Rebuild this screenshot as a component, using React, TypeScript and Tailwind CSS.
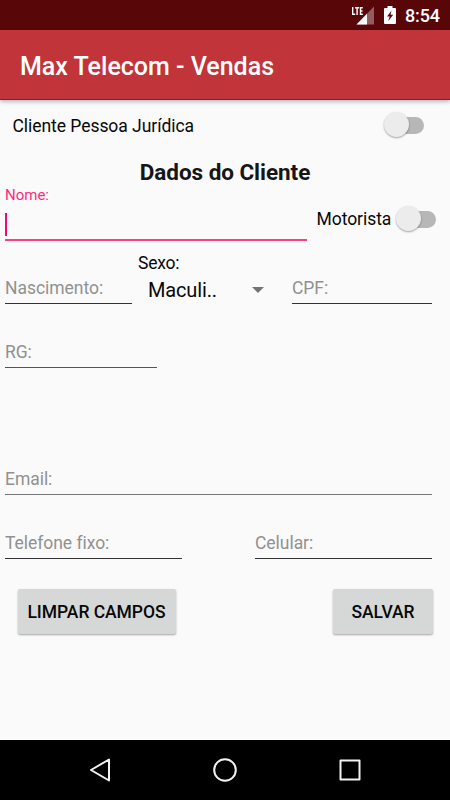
import clsx from 'clsx'

function Toggle() {
  return (
    <span role="switch" aria-checked="false" className="relative flex h-[26px] w-[40px] items-center justify-end">
      <span className="h-[17px] w-[34px] rounded-full bg-[#b7b7b7]" />
      <span className="absolute left-0 top-0 size-[25px] rounded-full bg-[#ececec] shadow-[0_1px_2px_rgba(0,0,0,0.35)]" />
    </span>
  )
}

type FieldProps = {
  label: string
  className?: string
  line?: string
}

function Field({ label, className, line = 'border-[#333333]' }: FieldProps) {
  return (
    <div className={clsx('flex h-[62px] items-end border-b pb-1', line, className)}>
      <span className="text-[17.5px] leading-[22px] tracking-[-0.04px] text-[#919191]">{label}</span>
    </div>
  )
}

function StatusBar() {
  return (
    <div className="flex h-[30px] items-center justify-end bg-[#590609] pr-[10px] text-white">
      <svg width="24" height="22" viewBox="0 0 24 22" className="mt-px">
        <path d="M23 1.500v18H5.500z" fill="#fff" fillOpacity="0.35" />
        <path d="M16 8.700v10.800H5.500z" fill="#fff" />
        <path d="M1.700 2v7.300h2.500M4.100 2.700h4M6.100 2.700v7.200M11.800 2.700H9.500v6.600h2.300M9.500 6h2" fill="none" stroke="#fff" strokeWidth="1.400" />
      </svg>
      <svg width="12" height="18" viewBox="0 0 12 18" className="ml-[9px]">
        <path d="M3.500 0h5v2H11q1 0 1 1v14q0 1-1 1H1q-1 0-1-1V3q0-1 1-1h2.500z" fill="#fff" />
        <path d="M7.500 4.500 3 10.500h2.700L4.200 15.200 9.200 8.800H6.500z" fill="#590609" />
      </svg>
      <span className="ml-[9px] mt-px text-[18px] font-medium leading-none tracking-[-0.1px]">8:54</span>
    </div>
  )
}

function NavBar() {
  return (
    <div className="flex h-[60px] items-center justify-between bg-black px-[88px]">
      <svg width="24" height="24" viewBox="0 0 24 24" fill="none" stroke="#f2f2f2" strokeWidth="2" strokeLinejoin="round">
        <path d="M21 1.500v21L3 12z" />
      </svg>
      <svg width="24" height="24" viewBox="0 0 24 24" fill="none" stroke="#f2f2f2" strokeWidth="2">
        <circle cx="12" cy="12" r="10.800" />
      </svg>
      <svg width="24" height="24" viewBox="0 0 24 24" fill="none" stroke="#f2f2f2" strokeWidth="2" strokeLinejoin="round">
        <rect x="2.500" y="2.500" width="19" height="19" />
      </svg>
    </div>
  )
}

export default function App() {
  return (
    <div className="flex h-[800px] w-[450px] flex-col overflow-hidden bg-[#fafafa] font-[Roboto,sans-serif] text-[#080808]">
      <StatusBar />

      <header className="z-10 flex h-[70px] items-center border-b border-[#b5090e] bg-[#c0343a] pl-5 pt-[4px] shadow-[0_2px_4px_rgba(0,0,0,0.25)]">
        <h1 className="text-[25px] font-medium text-white">Max Telecom - Vendas</h1>
      </header>

      <main className="flex-1">
        <div className="flex h-[50px] items-center justify-between pl-[12.5px] pr-[26px]">
          <span className="pt-[2px] text-[17.5px] tracking-[-0.05px]">Cliente Pessoa Jurídica</span>
          <Toggle />
        </div>

        <h2 className="mt-[9px] text-center text-[22.5px] font-bold leading-[27px] tracking-[-0.05px] text-[#161616]">Dados do Cliente</h2>

        <div className="flex h-[55px] pl-[5px]">
          <div className="flex w-[302px] flex-col border-b-2 border-[#ff3f82]">
            <span className="text-[15px] leading-[18px] text-[#ff2a7b]">Nome:</span>
            <span className="mt-[9px] h-[23px] w-[2px] bg-[#f50a6d]" />
          </div>
          <div className="flex items-center gap-[5px] pl-[9.5px] pt-[11px]">
            <span className="pt-px text-[17.5px] tracking-[-0.05px]">Motorista</span>
            <Toggle />
          </div>
        </div>

        {/* Nascimento, sexo e CPF */}
        <div className="flex h-[63px] items-end pl-[5px]">
          <Field label="Nascimento:" className="w-[127px]" />
          <div className="ml-[6px] h-[54px] w-[154px]">
            <div className="text-[17.5px] leading-[27px] tracking-[-0.2px]">Sexo:</div>
            <div className="flex h-[26px] items-center justify-between pl-[10px] pr-[28px]">
              <span className="text-[20px] tracking-[-0.15px]">Maculi..</span>
              <svg width="12" height="6" viewBox="0 0 12 6">
                <path d="M0 0h12L6 6z" fill="#737373" />
              </svg>
            </div>
          </div>
          <Field label="CPF:" className="w-[140px]" />
        </div>

        <Field label="RG:" className="ml-[5px] mt-[2px] w-[152px]" line="border-[#555555]" />
        <Field label="Email:" className="ml-[5px] mt-[65px] w-[427px]" line="border-[#777777]" />
        <div className="mt-[2px] flex justify-between pl-[5px] pr-[18px]">
          <Field label="Telefone fixo:" className="w-[177px]" />
          <Field label="Celular:" className="w-[177px]" />
        </div>

        <div className="mt-[30px] flex justify-between pl-[17.5px] pr-[17px]">
          <button className="h-[45px] w-[158px] rounded-[2px] bg-[#d6d8d7] pt-[2px] text-[17.5px] font-medium tracking-[-0.05px] shadow-[0_1px_2px_rgba(0,0,0,0.35)]">
            LIMPAR CAMPOS
          </button>
          <button className="h-[45px] w-[100px] rounded-[2px] bg-[#d6d8d7] pt-[2px] text-[17.5px] font-medium tracking-[-0.05px] shadow-[0_1px_2px_rgba(0,0,0,0.35)]">
            SALVAR
          </button>
        </div>
      </main>

      <NavBar />
    </div>
  )
}
